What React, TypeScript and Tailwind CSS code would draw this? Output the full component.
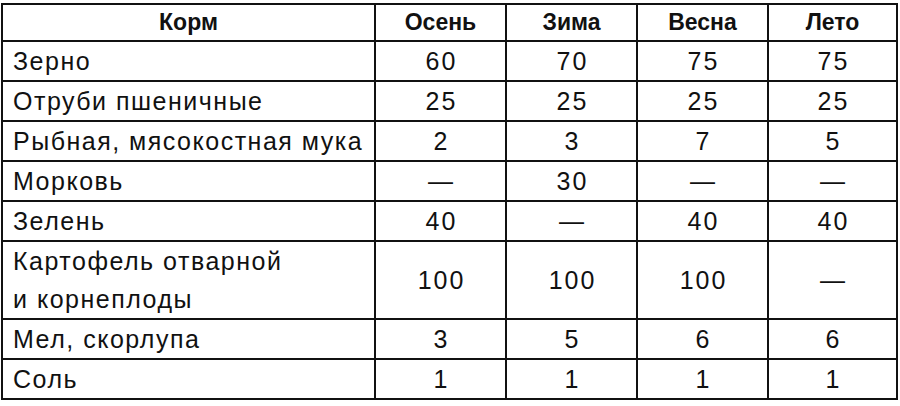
import React from "react";

const seasons = ["Осень", "Зима", "Весна", "Лето"];

const rows: { name: React.ReactNode; values: string[]; tall?: boolean }[] = [
  { name: "Зерно", values: ["60", "70", "75", "75"] },
  { name: "Отруби пшеничные", values: ["25", "25", "25", "25"] },
  { name: "Рыбная, мясокостная мука", values: ["2", "3", "7", "5"] },
  { name: "Морковь", values: ["—", "30", "—", "—"] },
  { name: "Зелень", values: ["40", "—", "40", "40"] },
  {
    name: (
      <>
        Картофель отварной
        <br />
        и корнеплоды
      </>
    ),
    values: ["100", "100", "100", "—"],
    tall: true,
  },
  { name: "Мел, скорлупа", values: ["3", "5", "6", "6"] },
  { name: "Соль", values: ["1", "1", "1", "1"] },
];

export default function App() {
  return (
    <div className="w-[900px] h-[406px] bg-white pt-[3px] pl-[1px] font-['Liberation_Sans',Arial,sans-serif] text-[#111]">
      <table className="border-collapse table-fixed">
        <colgroup>
          <col className="w-[373px]" />
          <col className="w-[131px]" />
          <col className="w-[131px]" />
          <col className="w-[131px]" />
          <col className="w-[129px]" />
        </colgroup>
        <thead>
          <tr className="h-[37px]">
            <th className="border-2 border-[#111] text-[23px] font-bold text-center leading-none">
              Корм
            </th>
            {seasons.map((s) => (
              <th key={s} className="border-2 border-[#111] text-[23px] font-bold text-center leading-none">
                {s}
              </th>
            ))}
          </tr>
        </thead>
        <tbody>
          {rows.map((r, i) => (
            <tr key={i} className={r.tall ? "h-[78px]" : "h-[39px]"}>
              <td className="border-2 border-[#111] pl-[10px] text-[25px] tracking-[1.5px] leading-[38px] text-left align-middle">
                {r.name}
              </td>
              {r.values.map((v, j) => (
                <td key={j} className="border-2 border-[#111] pl-[2px] text-[25px] tracking-[2px] leading-none text-center align-middle">
                  {v}
                </td>
              ))}
            </tr>
          ))}
        </tbody>
      </table>
    </div>
  );
}
